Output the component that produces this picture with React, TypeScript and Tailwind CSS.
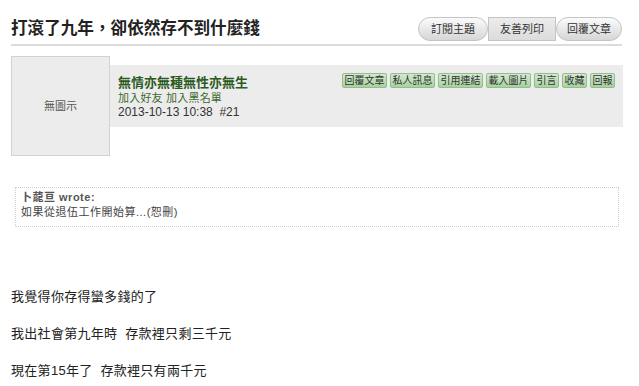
import React from "react";

const font = "font-['Liberation_Sans','Noto_Sans_CJK_TC',sans-serif]";

const topButtons = [
  { label: "訂閱主題", cls: "w-[70px] rounded-full bg-gradient-to-b from-[#fbfbfb] to-[#d6d6d6]" },
  { label: "友善列印", cls: "w-[68px] bg-gradient-to-b from-[#ececec] to-[#dcdcdc]" },
  { label: "回覆文章", cls: "w-[66px] rounded-full bg-gradient-to-b from-[#fbfbfb] to-[#d6d6d6]" },
];

const postButtons = ["回覆文章", "私人訊息", "引用連結", "載入圖片", "引言", "收藏", "回報"];

const App = () => {
  return (
    <div className={`w-[640px] h-[386px] overflow-hidden bg-white border-r border-[#d4d4d4] ${font}`}>
      {/* title row */}
      <div className="ml-[11px] mt-[17px] flex w-[611px] items-center justify-between h-[24px]">
        <h1 className="text-[16.6px] font-bold text-[#222] leading-[24px]">打滾了九年，卻依然存不到什麼錢</h1>
        <div className="flex">
          {topButtons.map((b) => (
            <div
              key={b.label}
              className={`${b.cls} h-[24px] border border-[#c4c4c4] flex items-center justify-center text-[11px] text-[#333]`}
            >
              {b.label}
            </div>
          ))}
        </div>
      </div>
      <div className="ml-[11px] mt-[3px] h-[2px] w-[611px] bg-[#dcdcdc]" />

      {/* post header */}
      <div className="ml-[11px] mt-[10px] flex">
        <div className="w-[99px] h-[100px] border border-[#d2d2d2] bg-[#ececec] flex items-center justify-center text-[11px] text-[#555]">
          無圖示
        </div>
        <div className="mt-[9px] w-[513px] h-[62px] bg-[#ececec] flex justify-between pl-[8px] pr-[8px]">
          <div className="pt-[9px]">
            <div className="text-[13px] font-bold text-[#2b5a1e] leading-[17px]">無情亦無種無性亦無生</div>
            <div className="text-[11px] tracking-[0.2px] text-[#3d6b2e] leading-[15px]">加入好友 加入黑名單</div>
            <div className="text-[12px] text-[#333] leading-[13px]">2013-10-13 10:38&nbsp;&nbsp;#21</div>
          </div>
          <div className="pt-[8px] flex gap-[3px] items-start">
            {postButtons.map((b) => (
              <div
                key={b}
                className="h-[15px] px-[1.5px] border border-[#93bd8a] rounded-[2px] bg-gradient-to-b from-[#d2ead0] to-[#a8d19e] text-[10px] leading-[13px] text-[#333]"
              >
                {b}
              </div>
            ))}
          </div>
        </div>
      </div>

      {/* quote */}
      <div className="ml-[15px] mt-[31px] w-[604px] h-[40px] border border-dotted border-[#cfcfcf] pl-[5px] pt-[2px] tracking-[0.5px]">
        <div className="text-[11px] font-bold text-[#555] leading-[15px]">卜蘢亘 wrote:</div>
        <div className="text-[11px] text-[#444] leading-[15px]">如果從退伍工作開始算...(恕刪)</div>
      </div>

      {/* body */}
      <div className="ml-[11px] mt-[60px] text-[13px] tracking-[0.3px] text-[#222] flex flex-col gap-[18px]">
        <p className="leading-[19px]">我覺得你存得蠻多錢的了</p>
        <p className="leading-[19px]">我出社會第九年時&nbsp;&nbsp;存款裡只剩三千元</p>
        <p className="leading-[19px]">現在第15年了&nbsp;&nbsp;存款裡只有兩千元</p>
      </div>
    </div>
  );
};

export default App;
